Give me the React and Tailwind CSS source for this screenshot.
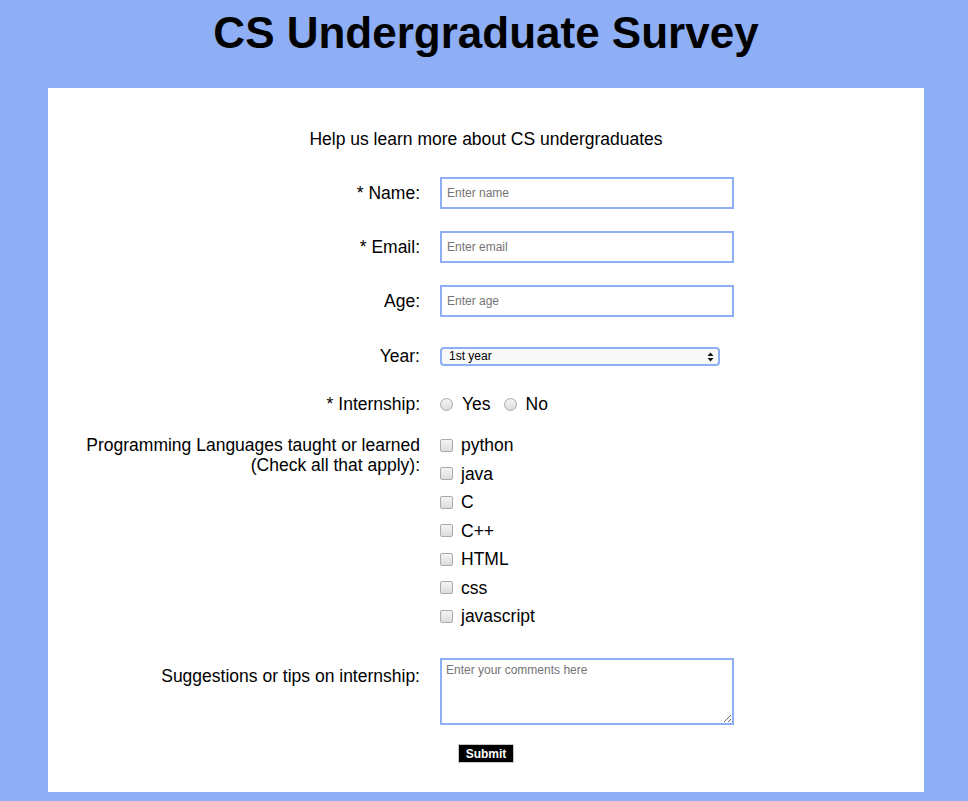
import React from 'react'

const LANGS = ['python', 'java', 'C', 'C++', 'HTML', 'css', 'javascript']

function Label({ children, className = '' }) {
  return <div className={`w-[372px] shrink-0 text-right text-[17.5px] leading-[20px] text-black ${className}`}>{children}</div>
}

function Radio() {
  return <span className="inline-block h-[13px] w-[13px] rounded-full border border-[#aaaaaa] bg-gradient-to-b from-[#f4f4f4] to-[#dcdcdc]" />
}

function Check() {
  return <span className="inline-block h-[13px] w-[13px] rounded-[2px] border border-[#aaaaaa] bg-gradient-to-b from-[#f4f4f4] to-[#dcdcdc]" />
}

const inputCls = 'h-[32px] w-[294px] border-2 border-[#8eaef5] bg-white px-[5px] text-[12px] text-black outline-none placeholder:text-[#757575]'

export default function App() {
  return (
    <div className="min-h-[801px] bg-[#8eaef5] pl-[48px] pr-[44px] pb-[9px]" style={{ fontFamily: '"Liberation Sans", Arial, sans-serif' }}>
      <h1 className="flex h-[88px] items-start justify-center pt-[8px] text-[44px] font-bold leading-[50px] text-black">CS Undergraduate Survey</h1>
      <div className="h-[704px] bg-white">
        <p className="pt-[40px] text-center text-[17.5px] leading-[22px] text-black">Help us learn more about CS undergraduates</p>

        <div className="mt-[27px] flex flex-col">
          <div className="flex items-center gap-[20px]">
            <Label>* Name:</Label>
            <input className={inputCls} placeholder="Enter name" />
          </div>
          <div className="mt-[22px] flex items-center gap-[20px]">
            <Label>* Email:</Label>
            <input className={inputCls} placeholder="Enter email" />
          </div>
          <div className="mt-[22px] flex items-center gap-[20px]">
            <Label>Age:</Label>
            <input className={inputCls} placeholder="Enter age" />
          </div>
          <div className="mt-[29px] flex items-center gap-[20px]">
            <Label>Year:</Label>
            <div className="relative flex h-[19px] w-[280px] items-center rounded-[4px] border-2 border-[#8eaef5] bg-[#f8f8f8] pl-[7px] text-[12px] leading-none text-black">
              1st year
              <svg className="absolute right-[4px] top-[3px]" width="7" height="10" viewBox="0 0 7 10">
                <path d="M0.5 4 L3.5 0.5 L6.5 4 Z" fill="#111" />
                <path d="M0.5 6 L3.5 9.5 L6.5 6 Z" fill="#111" />
              </svg>
            </div>
          </div>
          <div className="mt-[28px] flex items-center gap-[20px]">
            <Label>* Internship:</Label>
            <div className="flex items-center text-[17.5px] leading-[20px] text-black">
              <Radio />
              <span className="ml-[9px]">Yes</span>
              <span className="ml-[13px] flex"><Radio /></span>
              <span className="ml-[9px]">No</span>
            </div>
          </div>
          <div className="mt-[21px] flex items-start gap-[20px]">
            <Label>
              <div>Programming Languages taught or learned</div>
              <div>(Check all that apply):</div>
            </Label>
            <div className="flex flex-col gap-[8.5px] text-[17.5px] leading-[20px] text-black">
              {LANGS.map((l) => (
                <div key={l} className="flex items-center">
                  <Check />
                  <span className="ml-[8px]">{l}</span>
                </div>
              ))}
            </div>
          </div>
          <div className="mt-[32px] flex items-start gap-[20px]">
            <Label className="pt-[8px]">Suggestions or tips on internship:</Label>
            <textarea className="h-[67px] w-[294px] resize border-2 border-[#8eaef5] bg-white px-[4px] py-[2px] text-[12px] leading-[16px] text-black outline-none placeholder:text-[#757575]" placeholder="Enter your comments here" />
          </div>
          <div className="mt-[19px] flex justify-center">
            <button className="h-[19px] w-[56px] border border-[#c8c8c8] bg-black text-[12px] font-bold leading-none text-white">Submit</button>
          </div>
        </div>
      </div>
    </div>
  )
}
